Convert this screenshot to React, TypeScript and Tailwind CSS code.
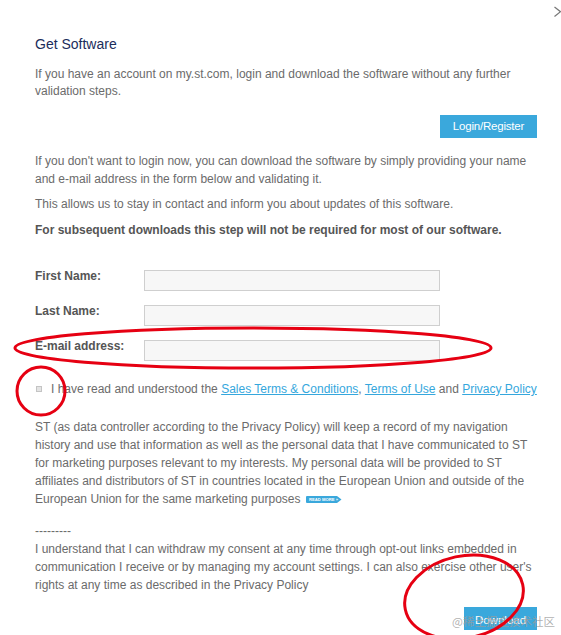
import React from 'react';

const body = "font-['Liberation_Sans',Arial,sans-serif]";

const ReadMore: React.FC = () => (
  <svg width="36" height="7" viewBox="0 0 36 7" className="inline-block align-middle ml-[2px]">
    <path d="M1 0 H31 L35.5 3.5 L31 7 H1 Q0 7 0 6 V1 Q0 0 1 0 Z" fill="#3aa8dc" />
    <text x="3" y="5.2" fontSize="4.2" fill="#fff" fontFamily="Liberation Sans, Arial, sans-serif" fontWeight="bold">
      READ MORE »
    </text>
  </svg>
);

const Field: React.FC<{ label: string }> = ({ label }) => (
  <div className="flex items-start">
    <label className="w-[109px] text-[12px] leading-[13px] font-bold text-[#555]">{label}</label>
    <input className="w-[296px] h-[21px] bg-[#f7f7f7] border border-[#cfcfcf] outline-none" />
  </div>
);

const App: React.FC = () => {
  return (
    <div className={`relative w-[561px] h-[635px] overflow-hidden bg-white ${body}`}>
      {/* close */}
      <svg width="9" height="12" viewBox="0 0 9 12" className="absolute top-[6px] left-[553px]">
        <path d="M1.5 1 L7.5 5.7 L1.5 10.5" fill="none" stroke="#777" strokeWidth="1.2" />
      </svg>

      <div className="pt-[34px] pl-[35px] w-[537px] text-[12px] text-[#6b6b6b]">
        <h2 className="text-[14px] leading-[20px] text-[#1b2d5b]">Get Software</h2>

        <p className="mt-[12px] leading-[16.5px]">
          If you have an account on my.st.com, login and download the software without any further validation steps.
        </p>

        <div className="flex justify-end mt-[16px]">
          <button className="w-[97px] h-[23px] bg-[#3aa8dc] text-white text-[11.5px] leading-[23px] tracking-[-0.2px]">
            Login/Register
          </button>
        </div>

        <p className="mt-[14px] leading-[18px]">
          If you don't want to login now, you can download the software by simply providing your name and e-mail
          address in the form below and validating it.
        </p>
        <p className="mt-[7px] leading-[18px]">
          This allows us to stay in contact and inform you about updates of this software.
        </p>
        <p className="mt-[8px] leading-[18px] font-bold text-[#555]">
          For subsequent downloads this step will not be required for most of our software.
        </p>

        <div className="mt-[31px] flex flex-col gap-[14px]">
          <Field label="First Name:" />
          <Field label="Last Name:" />
          <Field label="E-mail address:" />
        </div>

        <div className="mt-[19px] flex items-center leading-[18px]">
          <span className="w-[6px] h-[6px] ml-[1px] mr-[9px] bg-[#e4e4e4] border border-[#c4c4c4]" />
          <span>
            I have read and understood the{' '}
            <a className="text-[#35a7dd] underline">Sales Terms &amp; Conditions</a>,{' '}
            <a className="text-[#35a7dd] underline">Terms of Use</a> and{' '}
            <a className="text-[#35a7dd] underline">Privacy Policy</a>
          </span>
        </div>

        <p className="mt-[20px] leading-[18px]">
          ST (as data controller according to the Privacy Policy) will keep a record of my navigation history and use
          that information as well as the personal data that I have communicated to ST for marketing purposes relevant
          to my interests. My personal data will be provided to ST affiliates and distributors of ST in countries
          located in the European Union and outside of the European Union for the same marketing purposes <ReadMore />
        </p>

        <p className="mt-[14px] leading-[18px]">
          ---------
          <br />
          I understand that I can withdraw my consent at any time through opt-out links embedded in communication I
          receive or by managing my account settings. I can also exercise other user's rights at any time as described
          in the Privacy Policy
        </p>

        <div className="flex justify-end mt-[13px]">
          <button className="w-[73px] h-[23px] bg-[#3aa8dc] text-white text-[11.5px] leading-[26px]">Download</button>
        </div>
      </div>

      {/* watermark */}
      <span className="absolute left-[452px] top-[613px] text-[11.5px] leading-[16px] text-[#9c9c9c]/80 font-['Noto_Sans_CJK_SC',sans-serif] pointer-events-none">
        @稀土掘金技术社区
      </span>

      {/* red annotations */}
      <svg width="561" height="635" className="absolute inset-0 pointer-events-none">
        <ellipse cx="253" cy="348" rx="238" ry="20" fill="none" stroke="#e60012" strokeWidth="3" />
        <ellipse cx="41" cy="391" rx="24" ry="24" fill="none" stroke="#e60012" strokeWidth="3" />
        <ellipse
          cx="464"
          cy="597"
          rx="60"
          ry="41"
          transform="rotate(-12 464 597)"
          fill="none"
          stroke="#e60012"
          strokeWidth="3"
        />
      </svg>
    </div>
  );
};

export default App;
